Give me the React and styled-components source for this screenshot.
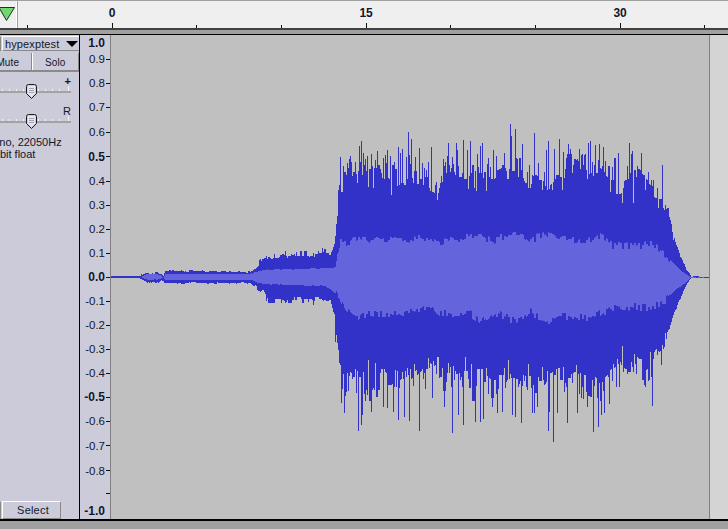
import React from 'react';
import styled, { createGlobalStyle } from 'styled-components';

const Global = createGlobalStyle`
  html, body { margin: 0; padding: 0; background: #a0a0a0; overflow: hidden; }
  body { font-family: "Liberation Sans", Arial, sans-serif; }
`;

const Page = styled.div`
  width: 728px; height: 529px; display: flex; flex-direction: column; overflow: hidden; background: #a0a0a0;
`;
const TimeBar = styled.div`
  height: 28px; flex: none; display: flex; background: #efefef; border-top: 1px solid #a0a0a0; box-sizing: border-box;
`;
const Corner = styled.div`
  width: 17px; flex: none; border-right: 1px solid #a0a0a0; box-shadow: inset -1px 0 0 #fff;
`;
const TimeRuler = styled.div`
  flex: 1; display: flex; overflow: hidden;
`;
const TimeCells = styled.div`
  display: flex; flex: none; margin-left: -32.83px;
`;
const TimeCell = styled.div`
  width: 84.67px; flex: none; height: 27px; display: flex; flex-direction: column; align-items: center; justify-content: flex-end;
`;
const TimeLabel = styled.span`
  font-size: 12px; line-height: 14px; font-weight: 700; color: #10182c; margin-bottom: 3px;
`;
const TimeTick = styled.i`
  display: block; width: 1px; height: ${p => (p.$major ? 5 : 3)}px; background: #111;
`;
const Divider = styled.div`
  flex: none; height: 7px; box-sizing: border-box; background: #a0a0a0; border-top: 2px solid #404040; border-bottom: 1px solid #000;
`;
const TrackRow = styled.div`
  flex: none; height: 484px; display: flex; border-bottom: 2px solid #000;
`;
const Panel = styled.div`
  width: 79px; flex: none; background: #cccbd9; border-right: 1px solid #000; overflow: hidden; display: flex; flex-direction: column;
`;
const PanelInner = styled.div`
  margin-left: -16px; width: 95px; flex: 1; display: flex; flex-direction: column;
`;
const TitleRow = styled.div`
  height: 15px; margin-top: 1px; display: flex;
`;
const CloseBox = styled.div`
  width: 17px; flex: none; box-sizing: border-box; border: 1px solid; border-color: #fff #8a8a8a #8a8a8a #fff;
`;
const TitleButton = styled.div`
  flex: 1; box-sizing: border-box; margin-left: 1px; display: flex; align-items: center; justify-content: space-between; padding: 0 1px 0 2px;
  border-top: 1px solid #fff; border-left: 1px solid #fff; border-bottom: 1px solid #8a8a8a; font-size: 11px; color: #10182c; letter-spacing: .12px;
`;
const DropArrow = styled.span`
  width: 0; height: 0; border-left: 6px solid transparent; border-right: 6px solid transparent; border-top: 6px solid #000;
`;
const ToggleRow = styled.div`
  height: 17px; margin-top: 2px; display: flex; border-bottom: 2px solid #8a8a8a;
`;
const Toggle = styled.div`
  flex: ${p => p.$grow}; display: flex; align-items: center; justify-content: center; padding-top: 2px; font-size: 10px; color: #10182c; box-sizing: border-box;
  border-left: 1px solid #fff; border-right: 1px solid #8a8a8a; letter-spacing: .1px;
`;
const SliderWrap = styled.div`
  position: relative; margin-left: 16px; width: 79px; height: 20px; margin-top: ${p => p.$top}px;
`;
const SliderMark = styled.span`
  position: absolute; right: 8px; top: -5px; font-size: 11px; line-height: 13px; font-weight: ${p => (p.$bold ? 700 : 400)}; color: #10182c;
`;
const FormatLine = styled.div`
  font-size: 11px; line-height: 12px; color: #10182c; white-space: nowrap;
`;
const FormatBlock = styled.div` margin-top: 6px; `;
const Spacer = styled.div` flex: 1; `;
const SelectRow = styled.div`
  display: flex; height: 18px; gap: 1px;
`;
const SelectButton = styled.div`
  width: 59px; box-sizing: border-box; display: flex; align-items: center; justify-content: center; padding-left: 3px; font-size: 11px; letter-spacing: .2px; color: #10182c;
  border: 1px solid; border-color: #fff #8a8a8a #8a8a8a #fff;
`;
const VRuler = styled.div`
  width: 30px; flex: none; background: #cccbd9; display: flex; flex-direction: column; overflow: hidden;
`;
const VRow = styled.div`
  flex: none; height: ${p => p.$h}px; display: flex; align-items: ${p => (p.$end ? 'flex-end' : 'center')}; justify-content: flex-end; gap: 1px; padding-right: ${p => (p.$plain ? 5 : 0)}px;
`;
const VLabel = styled.span`
  font-size: ${p => (p.$bold ? 12 : 11.5)}px; line-height: 12px; font-weight: ${p => (p.$bold ? 700 : 400)}; color: #10182c;
  transform: translateY(${p => p.$nudge || 0}px);
`;
const VTick = styled.i` display: block; width: 4px; height: 1px; background: #111; `;
const WaveArea = styled.div`
  width: 598px; flex: none; background: #c0c0c0; border-left: 1px solid #808080; border-right: 1px solid #808080;
`;
const Blank = styled.div` flex: 1; background: #d4d4d4; `;
const WaveSvg = styled.svg` display: block; `;
const FlagSvg = styled.svg` display: block; overflow: visible; `;

const sliderTicks = [2, 9, 16, 23, 38, 45, 52, 59];
const Slider = ({ mark, bold, top }) => (
  <SliderWrap $top={top}>
    <svg width="79" height="20" viewBox="0 0 79 20" style={{ display: 'block' }}>
      <rect x="0" y="11" width="71" height="2" fill="#a3a3a3" />
      {sliderTicks.map(x => <rect key={x} x={x} y="9" width="1" height="2" fill="#f2f2f2" />)}
      <rect x="68" y="6" width="1" height="5" fill="#f2f2f2" />
      <path d="M26.500 6.500q0-2 2-2h6q2 0 2 2v7l-5 5-5-5z" fill="#cfcede" stroke="#1c1c1c" strokeWidth="1" />
      <path d="M28 6h7v7.500l-3.500 3.500-3.500-3.500z" fill="#e6e5f0" />
      <path d="M29 8.500h5M29 10.500h5M29 12.500h5" stroke="#a0a0b8" strokeWidth="1" />
    </svg>
    <SliderMark $bold={bold}>{mark}</SliderMark>
  </SliderWrap>
);

const rulerRows = [
  ['1.0', 1, 12, 2], ['0.9', 0, 24], ['0.8', 0, 24], ['0.7', 0, 24.5], ['0.6', 0, 25], ['0.5', 1, 24.5],
  ['0.4', 0, 24], ['0.3', 0, 24], ['0.2', 0, 24], ['0.1', 0, 24], ['0.0', 1, 24],
  ['-0.1', 0, 24], ['-0.2', 0, 24], ['-0.3', 0, 24], ['-0.4', 0, 24], ['-0.5', 1, 24],
  ['-0.6', 0, 24], ['-0.7', 0, 25], ['-0.8', 0, 25], ['', 0, 21.5], ['-1.0', 1, 10.5, 1],
];

const topBody = [[110,276],[140,276],[141,275],[144,274],[147,272],[150,274],[158,273],[161,275],[163,276],[165,271],[250,272],[255,268],[262,260],[268,255],[275,257],[330,254],[335,240],[337,225],[338,198],[340,188],[343,178],[360,172],[380,177],[400,179],[420,179],[437,187],[445,175],[460,177],[475,182],[490,177],[510,168],[520,172],[540,182],[560,177],[580,175],[600,170],[610,184],[620,184],[630,177],[640,184],[650,195],[660,195],[665,207],[670,227],[675,243],[680,257],[685,267],[690,275],[691,276],[709,276]];
const botBody = [[110,278],[140,278],[141,279],[144,281],[147,282],[150,281],[158,282],[161,280],[163,279],[165,283],[250,283],[255,286],[262,292],[268,299],[275,299],[330,299],[334,315],[337,340],[339,365],[342,373],[360,378],[375,378],[400,378],[415,373],[437,363],[450,375],[470,378],[490,378],[510,378],[530,378],[550,381],[570,378],[590,383],[600,383],[610,372],[620,358],[630,360],[640,367],[650,361],[660,347],[670,323],[675,310],[680,297],[685,287],[690,279],[691,278],[709,278]];
const topRms = [[110,277],[140,277],[147,274],[160,275],[163,277],[165,274],[250,274],[262,270],[330,268],[335,267],[337,253],[340,241],[345,243],[360,236],[370,242],[400,238],[430,240],[440,245],[450,239],[480,235],[490,241],[515,233],[530,241],[545,232],[555,238],[575,241],[590,238],[600,235],[610,245],[630,246],[650,244],[660,250],[670,260],[680,270],[690,277],[709,277]];
const botRms = [[110,277],[140,277],[147,280],[160,279],[163,277],[165,280],[250,280],[262,284],[325,286],[335,293],[340,300],[345,310],[355,318],[365,314],[400,315],[430,309],[440,314],[470,314],[480,321],[495,313],[515,321],[530,312],[546,323],[560,316],[590,319],[600,313],[620,306],[650,308],[665,300],[675,290],[685,283],[690,278],[709,277]];

const topSpikes = [[340,157],[343,166],[347,163],[350,156],[355,162],[359,146],[361,141],[363,153],[371,154],[377,151],[383,158],[387,150],[394,162],[398,147],[402,149],[400,153],[408,132],[411,139],[415,157],[419,148],[422,163],[428,162],[431,147],[445,162],[448,143],[452,157],[456,143],[457,150],[463,140],[467,150],[470,141],[480,146],[482,143],[488,158],[493,150],[496,156],[504,153],[510,124],[511,136],[515,129],[519,158],[522,144],[520,158],[534,133],[538,163],[546,150],[548,141],[554,149],[559,139],[563,152],[568,144],[570,149],[576,160],[579,149],[581,155],[588,143],[590,141],[595,145],[599,144],[603,147],[605,161],[618,153],[629,143],[632,151],[637,166],[641,153],[648,172],[652,186],[657,188],[662,165],[668,208],[671,224],[673,240]];
const topNotches = [[341,192],[373,188],[368,187],[391,195],[437,200],[439,188],[435,185],[474,188],[476,191],[486,191],[405,185],[423,185],[528,188],[530,188],[542,190],[552,190],[562,190],[587,179],[610,192],[622,203],[633,203],[658,208]];
const botSpikes = [[341,403],[344,413],[358,431],[361,425],[362,415],[371,412],[383,407],[387,408],[393,412],[398,420],[404,417],[409,421],[419,431],[432,398],[444,407],[452,433],[458,415],[463,425],[475,422],[480,422],[483,419],[492,407],[497,413],[502,412],[512,415],[515,417],[521,423],[532,413],[534,413],[537,407],[548,431],[549,412],[553,442],[557,413],[567,423],[577,413],[583,399],[587,407],[593,432],[598,427],[601,415],[604,413],[609,404],[616,387],[619,387],[645,387],[652,406]];
const botNotches = [[347,373],[368,360],[375,363],[395,370],[402,372],[414,364],[422,369],[428,358],[437,357],[438,357],[459,373],[465,357],[471,364],[486,368],[504,368],[508,360],[523,375],[528,364],[542,367],[563,367],[576,365],[622,346],[634,354],[650,352],[657,355],[665,333]];

const lerp = (pts, x) => {
  for (let i = 1; i < pts.length; i++) {
    if (x <= pts[i][0]) {
      const [a, b] = pts[i - 1];
      const [c, d] = pts[i];
      return b + ((d - b) * (x - a)) / (c - a || 1);
    }
  }
  return pts[pts.length - 1][1];
};
let seed = 9871;
const rnd = () => { seed = (seed * 16807) % 2147483647; return seed / 2147483647; };

const buildWave = () => {
  let dark = '';
  let light = '';
  const tMap = Object.fromEntries(topSpikes);
  const tNot = Object.fromEntries(topNotches);
  const bMap = Object.fromEntries(botSpikes);
  const bNot = Object.fromEntries(botNotches);
  let rt = 0, rb = 0, slowT = 0, slowB = 0, holdT = 0, holdB = 0;
  for (let x = 110; x < 709; x++) {
    const amp = x < 140 || x > 690 ? 0 : x < 255 ? 1.5 : x < 335 ? 6 : x > 665 ? 2 : 24;
    const skew = (a) => (Math.pow(rnd(), 2.2) - 0.18) * a;
    if (x % 7 === 0) { slowT = (rnd() - 0.5) * amp * 0.7; slowB = (rnd() - 0.5) * amp * 0.7; }
    if (rnd() < 0.6) { holdT = skew(amp); holdB = skew(amp); }
    let t = Math.round(lerp(topBody, x) - holdT - slowT);
    let b = Math.round(lerp(botBody, x) + holdB + slowB);
    if (tMap[x]) t = tMap[x];
    if (tNot[x]) t = tNot[x];
    if (bMap[x]) b = bMap[x];
    if (bNot[x]) b = bNot[x];
    if (x > 698) { t = 277; b = 278; }
    dark += `M${x} ${t}h1V${b}h-1z`;
    const n = x > 335 && x < 670 ? 8 : 1;
    if (x % 2 === 0) { rt = (rnd() - 0.5) * n; rb = (rnd() - 0.5) * n; }
    const lt = Math.round(lerp(topRms, x) + rt);
    const lb = Math.round(lerp(botRms, x) + rb);
    if (lb > lt) light += `M${x} ${lt}h1V${lb}h-1z`;
  }
  return { dark, light };
};
const wave = buildWave();

const timeCells = [null, '0', null, null, '15', null, null, '30', null];

export default function App() {
  return (
    <Page>
      <Global />
      <TimeBar>
        <Corner>
          <FlagSvg width="17" height="27" viewBox="0 0 17 27">
            <path d="M-1 6.500h15.500L6.500 19.500z" fill="#6fd86f" stroke="#2a2a2a" strokeWidth="1" />
          </FlagSvg>
        </Corner>
        <TimeRuler>
          <TimeCells>
            {timeCells.map((label, i) => (
              <TimeCell key={i}>
                {label && <TimeLabel>{label}</TimeLabel>}
                <TimeTick $major={!!label} />
              </TimeCell>
            ))}
          </TimeCells>
        </TimeRuler>
      </TimeBar>
      <Divider />
      <TrackRow>
        <Panel>
          <PanelInner>
            <TitleRow>
              <CloseBox />
              <TitleButton>hypexptest<DropArrow /></TitleButton>
            </TitleRow>
            <ToggleRow>
              <Toggle $grow={47}>Mute</Toggle>
              <Toggle $grow={47}>Solo</Toggle>
            </ToggleRow>
            <Slider top={8} mark="+" bold />
            <Slider top={10} mark="R" />
            <FormatBlock>
              <FormatLine>Mono, 22050Hz</FormatLine>
              <FormatLine>32-bit float</FormatLine>
            </FormatBlock>
            <Spacer />
            <SelectRow><CloseBox /><SelectButton>Select</SelectButton></SelectRow>
          </PanelInner>
        </Panel>
        <VRuler>
          {rulerRows.map(([t, b, h, nudge], i) => {
            const plain = i === 0 || t === '-1.0';
            return (
              <VRow key={i} $h={h} $plain={plain} $end={i === 0}>
                {t && <VLabel $bold={!!b} $nudge={nudge}>{t}</VLabel>}
                {!plain && <VTick />}
              </VRow>
            );
          })}
        </VRuler>
        <WaveArea>
          <WaveSvg width="598" height="484" viewBox="111 35 598 484" shapeRendering="crispEdges">
            <path d={wave.dark} fill="#3232c8" />
            <path d={wave.light} fill="#6464dc" />
          </WaveSvg>
        </WaveArea>
        <Blank />
      </TrackRow>
    </Page>
  );
}
